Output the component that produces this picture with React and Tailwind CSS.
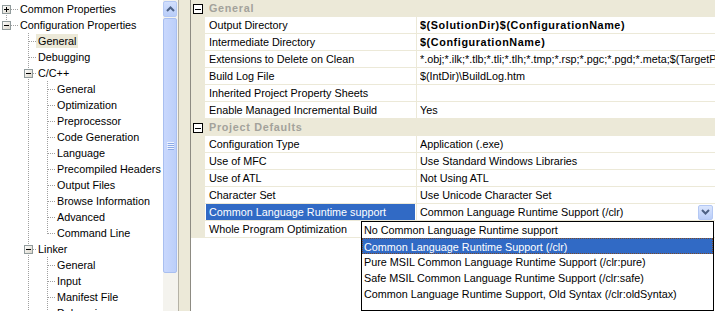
import React from "react";

const treeRows = [
  { t: "Common Properties", lvl: 0, box: "plus", v0: "down" },
  { t: "Configuration Properties", lvl: 0, box: "minus", v0: "up" },
  { t: "General", lvl: 1, sel: true },
  { t: "Debugging", lvl: 1 },
  { t: "C/C++", lvl: 1, box: "minus" },
  { t: "General", lvl: 2 },
  { t: "Optimization", lvl: 2 },
  { t: "Preprocessor", lvl: 2 },
  { t: "Code Generation", lvl: 2 },
  { t: "Language", lvl: 2 },
  { t: "Precompiled Headers", lvl: 2 },
  { t: "Output Files", lvl: 2 },
  { t: "Browse Information", lvl: 2 },
  { t: "Advanced", lvl: 2 },
  { t: "Command Line", lvl: 2, last: true },
  { t: "Linker", lvl: 1, box: "minus" },
  { t: "General", lvl: 2 },
  { t: "Input", lvl: 2 },
  { t: "Manifest File", lvl: 2 },
  { t: "Debugging", lvl: 2 },
];

const DOT = { stroke: "#a0a0a0", strokeWidth: 1, strokeDasharray: "1 1", shapeRendering: "crispEdges" };

function ExpBox({ L, kind, stroke = "#919b9c" }) {
  return (
    <g shapeRendering="crispEdges">
      <defs>
        <linearGradient id="bxg" x1="0" y1="0" x2="1" y2="1">
          <stop offset="0" stopColor="#ffffff" />
          <stop offset="1" stopColor="#d8d4c8" />
        </linearGradient>
      </defs>
      <rect x={L + 0.5} y={4.5} width={8} height={8} fill="url(#bxg)" stroke={stroke} />
      <line x1={L + 2} y1={8.5} x2={L + 7} y2={8.5} stroke="#000" />
      {kind === "plus" && <line x1={L + 4.5} y1={6} x2={L + 4.5} y2={11} stroke="#000" />}
    </g>
  );
}

function TreeRow({ r }) {
  const w = r.lvl === 0 ? 18 : r.lvl === 1 ? 36 : 55;
  return (
    <div className="flex h-[16px] items-center whitespace-nowrap">
      <svg width={w} height={16} className="shrink-0">
        {r.lvl === 0 && r.v0 === "down" && <line x1={6.5} y1={12} x2={6.5} y2={16} style={DOT} />}
        {r.lvl === 0 && r.v0 === "up" && <line x1={6.5} y1={0} x2={6.5} y2={4} style={DOT} />}
        {r.lvl === 0 && <line x1={11} y1={8.5} x2={18} y2={8.5} style={DOT} />}
        {r.lvl >= 1 && <line x1={28.5} y1={0} x2={28.5} y2={16} style={DOT} />}
        {r.lvl === 1 && !r.box && <line x1={29} y1={8.5} x2={36} y2={8.5} style={DOT} />}
        {r.lvl === 1 && r.box && <line x1={33} y1={8.5} x2={36} y2={8.5} style={DOT} />}
        {r.lvl === 2 && <line x1={47.5} y1={0} x2={47.5} y2={r.last ? 9 : 16} style={DOT} />}
        {r.lvl === 2 && <line x1={48} y1={8.5} x2={55} y2={8.5} style={DOT} />}
        {r.lvl === 1 && r.box && <line x1={47.5} y1={12} x2={47.5} y2={16} style={DOT} />}
        {r.box && <ExpBox L={r.lvl === 0 ? 2 : 24} kind={r.box} />}
      </svg>
      <span
        className={
          "h-[14px] px-[2px] leading-[14px] text-black " + (r.sel ? "bg-[#ece9d8]" : "")
        }
      >
        {r.t}
      </span>
    </div>
  );
}

function Scrollbar() {
  return (
    <div className="flex w-[15px] shrink-0 flex-col bg-[#f4f3ee] pt-[1px] pr-[1px]">
      <div className="flex h-[16px] items-center justify-center rounded-[2px] border border-[#b4c8f4] bg-gradient-to-b from-[#d2dffd] to-[#b9cdf8]">
        <svg width="9" height="6" viewBox="0 0 9 6">
          <path d="M1 5 L4.5 1.5 L8 5" fill="none" stroke="#4d6185" strokeWidth="2" />
        </svg>
      </div>
      <div className="mt-[1px] flex h-[255px] items-center justify-center rounded-[2px] border border-[#a9bff0] bg-gradient-to-r from-[#c9d8fd] to-[#bccffa]">
        <svg width="7" height="8" viewBox="0 0 7 8" shapeRendering="crispEdges">
          <line x1="0" y1="0.5" x2="7" y2="0.5" stroke="#eef3fe" />
          <line x1="0" y1="2.5" x2="7" y2="2.5" stroke="#eef3fe" />
          <line x1="0" y1="4.5" x2="7" y2="4.5" stroke="#eef3fe" />
          <line x1="0" y1="6.5" x2="7" y2="6.5" stroke="#eef3fe" />
          <line x1="1" y1="1.5" x2="8" y2="1.5" stroke="#8caae6" />
          <line x1="1" y1="3.5" x2="8" y2="3.5" stroke="#8caae6" />
          <line x1="1" y1="5.5" x2="8" y2="5.5" stroke="#8caae6" />
          <line x1="1" y1="7.5" x2="8" y2="7.5" stroke="#8caae6" />
        </svg>
      </div>
    </div>
  );
}

function HeaderBox() {
  return (
    <svg width="10" height="10" viewBox="0 0 10 10" shapeRendering="crispEdges">
      <rect x="0.5" y="0.5" width="9" height="9" fill="#fff" stroke="#000" />
      <line x1="2" y1="5.5" x2="8" y2="5.5" stroke="#000" />
    </svg>
  );
}

const gridRows = [
  { h: "General" },
  { n: "Output Directory", v: "$(SolutionDir)$(ConfigurationName)", b: true },
  { n: "Intermediate Directory", v: "$(ConfigurationName)", b: true },
  { n: "Extensions to Delete on Clean", v: "*.obj;*.ilk;*.tlb;*.tli;*.tlh;*.tmp;*.rsp;*.pgc;*.pgd;*.meta;$(TargetPath)" },
  { n: "Build Log File", v: "$(IntDir)\\BuildLog.htm" },
  { n: "Inherited Project Property Sheets", v: "" },
  { n: "Enable Managed Incremental Build", v: "Yes" },
  { h: "Project Defaults" },
  { n: "Configuration Type", v: "Application (.exe)" },
  { n: "Use of MFC", v: "Use Standard Windows Libraries" },
  { n: "Use of ATL", v: "Not Using ATL" },
  { n: "Character Set", v: "Use Unicode Character Set" },
  { n: "Common Language Runtime support", v: "Common Language Runtime Support (/clr)", sel: true },
  { n: "Whole Program Optimization", v: "" },
];

const options = [
  "No Common Language Runtime support",
  "Common Language Runtime Support (/clr)",
  "Pure MSIL Common Language Runtime Support (/clr:pure)",
  "Safe MSIL Common Language Runtime Support (/clr:safe)",
  "Common Language Runtime Support, Old Syntax (/clr:oldSyntax)",
];

function GridRow({ r }) {
  if (r.h) {
    return (
      <div className="flex h-[17px] items-center bg-[#ece9d8]">
        <div className="flex w-[14px] shrink-0 justify-start pl-[2px]">
          <HeaderBox />
        </div>
        <span className="pl-[4px] font-bold tracking-[0.7px] text-[#a3a29b]">{r.h}</span>
      </div>
    );
  }
  return (
    <div className="flex h-[17px]">
      <div className="w-[14px] shrink-0 bg-[#ece9d8]" />
      <div className="w-[212px] shrink-0 border-r border-b border-[#ece9d8]">
        <div
          className={
            "h-[16px] truncate leading-[16px] " +
            (r.sel ? "mx-[1px] bg-[#316ac5] pl-[3px] text-white" : "pl-[4px] text-black")
          }
        >
          {r.n}
        </div>
      </div>
      <div className="flex min-w-0 flex-1 items-center border-b border-[#ece9d8] pl-[3px]">
        <span
          className={
            "min-w-0 flex-1 overflow-hidden whitespace-nowrap leading-[16px] text-black " +
            (r.b ? "font-bold tracking-[0.6px]" : "")
          }
        >
          {r.v}
        </span>
        {r.sel && (
          <div className="mr-[2px] flex h-[15px] w-[15px] shrink-0 items-center justify-center rounded-[2px] border border-[#b4c8f4] bg-gradient-to-b from-[#dbe6fe] to-[#b9cdf8]">
            <svg width="9" height="6" viewBox="0 0 9 6">
              <path d="M1 1 L4.5 4.5 L8 1" fill="none" stroke="#4d6185" strokeWidth="2" />
            </svg>
          </div>
        )}
      </div>
    </div>
  );
}

export default function App() {
  return (
    <div className="flex h-[311px] w-[715px] overflow-hidden bg-white font-['Liberation_Sans',Arial,sans-serif] text-[10.8px]">
      <div className="w-[163px] shrink-0 overflow-hidden bg-white pt-[1px]">
        {treeRows.map((r, i) => (
          <TreeRow key={i} r={r} />
        ))}
      </div>
      <Scrollbar />
      <div className="w-[1px] shrink-0 bg-[#b5b2a6]" />
      <div className="w-[11px] shrink-0 bg-[#ece9d8]" />
      <div className="w-[1px] shrink-0 bg-[#8d8b82]" />
      <div className="relative min-w-0 flex-1 bg-white">
        {gridRows.map((r, i) => (
          <GridRow key={i} r={r} />
        ))}
        <div className="absolute left-[170px] top-[221px] h-[90px] w-[353px] border border-black bg-white">
          {options.map((o, i) => (
            <div
              key={i}
              className={
                "h-[16px] whitespace-nowrap leading-[16px] " +
                (i === 1
                  ? "border border-dotted border-[#7a4a2a] bg-[#316ac5] pl-[1px] leading-[14px] text-white"
                  : "pl-[2px] text-black")
              }
            >
              {o}
            </div>
          ))}
        </div>
      </div>
    </div>
  );
}
